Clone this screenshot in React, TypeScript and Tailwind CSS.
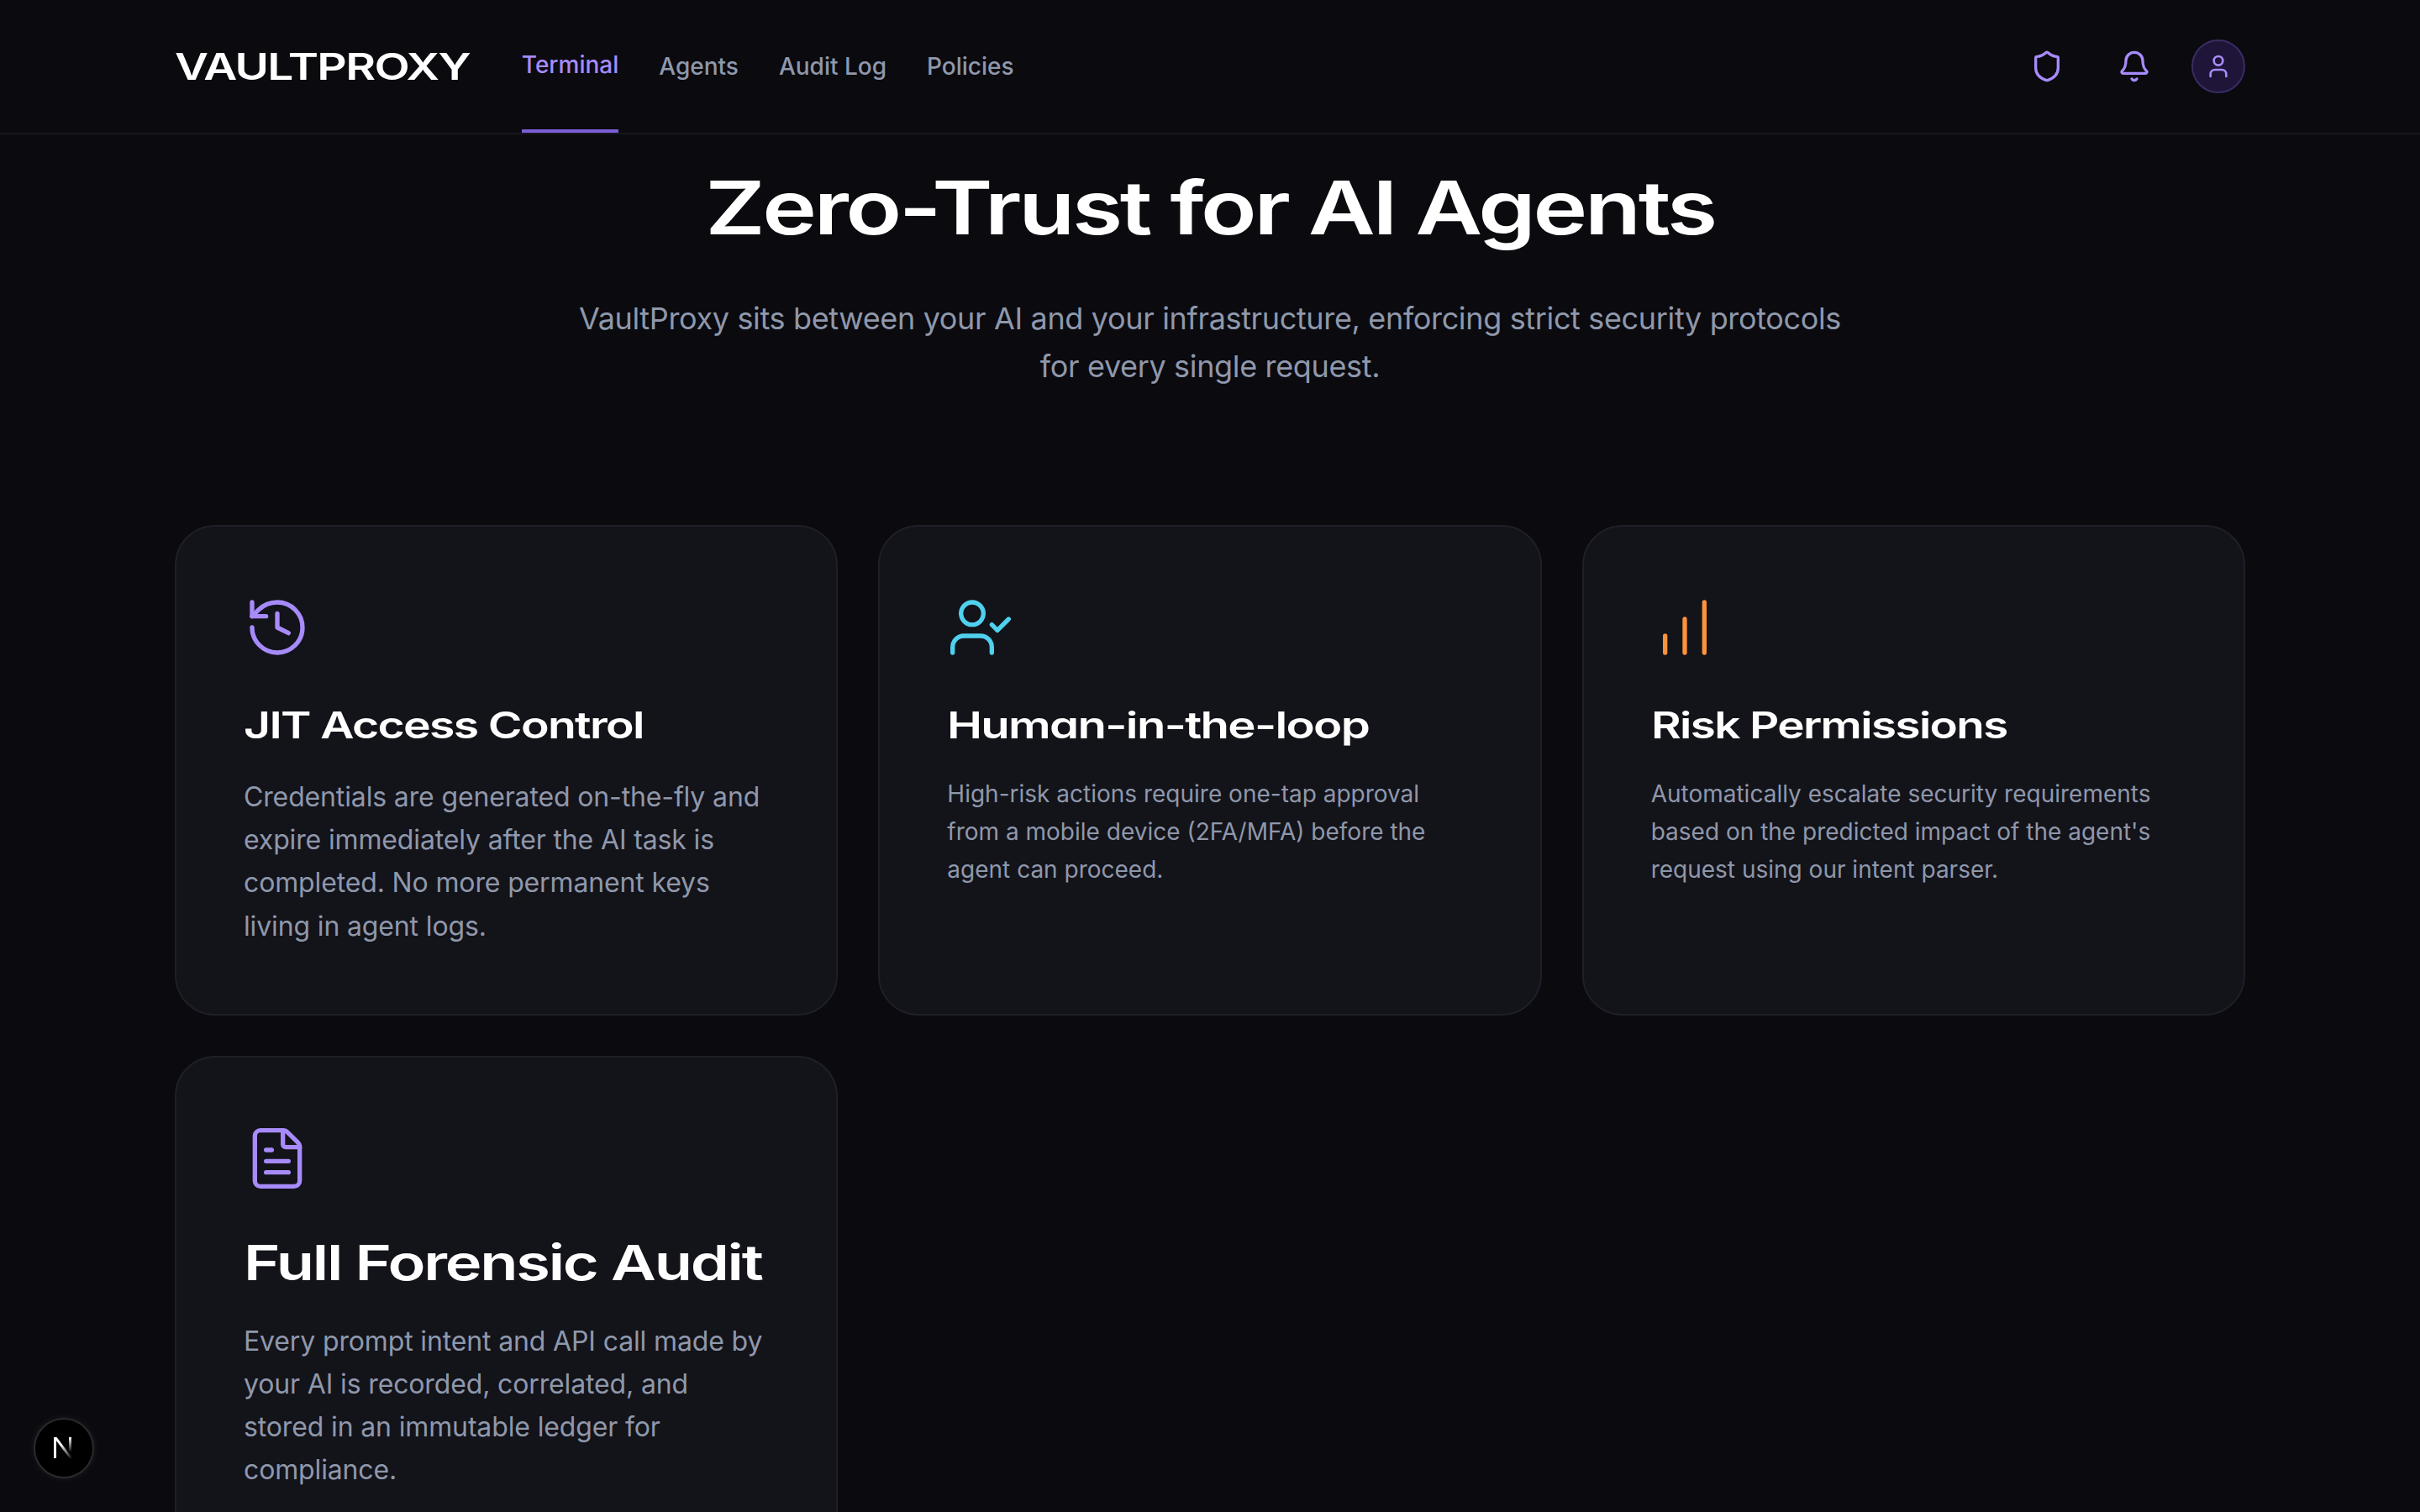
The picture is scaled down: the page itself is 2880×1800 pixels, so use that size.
import { Bell, ChartNoAxesColumnIncreasing, FileText, History, Shield, User, UserCheck } from "lucide-react"

const navLinks = ["Agents", "Audit Log", "Policies"]

const features = [
  {
    icon: <History strokeWidth={1.6} className="h-20 w-20 text-[#a78bfa]" />,
    title: "JIT Access Control",
    titleClass: "text-[44px] leading-[56px] scale-x-[1.257]",
    text: "Credentials are generated on-the-fly and expire immediately after the AI task is completed. No more permanent keys living in agent logs.",
    textClass: "text-[32px] leading-[51.2px] tracking-[-0.14px]",
  },
  {
    icon: <UserCheck strokeWidth={1.6} className="h-20 w-20 text-[#4fd1ee]" />,
    title: "Human-in-the-loop",
    titleClass: "text-[44px] leading-[56px] scale-x-[1.28]",
    text: "High-risk actions require one-tap approval from a mobile device (2FA/MFA) before the agent can proceed.",
    textClass: "text-[28px] leading-[45px]",
  },
  {
    icon: <ChartNoAxesColumnIncreasing strokeWidth={1.6} className="h-20 w-20 text-[#fb923c]" />,
    title: "Risk Permissions",
    titleClass: "text-[44px] leading-[56px] scale-x-[1.245]",
    text: "Automatically escalate security requirements based on the predicted impact of the agent's request using our intent parser.",
    textClass: "text-[28px] leading-[45px]",
  },
  {
    icon: <FileText strokeWidth={1.6} className="h-20 w-20 text-[#a78bfa]" />,
    title: "Full Forensic Audit",
    titleClass: "text-[58px] leading-[72px] scale-x-[1.275]",
    text: "Every prompt intent and API call made by your AI is recorded, correlated, and stored in an immutable ledger for compliance.",
    textClass: "text-[32px] leading-[51.2px] tracking-[-0.14px]",
  },
]

function NextBadge() {
  return (
    <div className="fixed bottom-[40px] left-[40px] flex h-[72px] w-[72px] items-center justify-center rounded-full border-2 border-[#2a2a2e] bg-black shadow-[0_0_8px_rgba(255,255,255,0.08)]">
      <svg width="30" height="30" viewBox="0 0 30 30" fill="none">
        <defs>
          <linearGradient id="n-diagonal" x1="12" y1="10" x2="24" y2="28" gradientUnits="userSpaceOnUse">
            <stop stopColor="#fff" />
            <stop offset="1" stopColor="#fff" stopOpacity="0" />
          </linearGradient>
          <linearGradient id="n-right" x1="22" y1="2" x2="22" y2="20" gradientUnits="userSpaceOnUse">
            <stop stopColor="#fff" />
            <stop offset="1" stopColor="#fff" stopOpacity="0" />
          </linearGradient>
        </defs>
        <path d="M3 2h3v25H3z" fill="#fff" />
        <path d="M3 2h3.6L26 28l-2.6 1.6z" fill="url(#n-diagonal)" />
        <path d="M21 2h3v19h-3z" fill="url(#n-right)" />
      </svg>
    </div>
  )
}

export default function App() {
  return (
    <div className="h-screen overflow-hidden bg-[#0a0a0f] font-['Inter',sans-serif]">
      <header className="h-[160px] border-b-2 border-[#17171f]">
        <div className="mx-auto flex h-full max-w-[2560px] items-center justify-between px-12">
          <div className="flex h-full items-center gap-[132px]">
            <span className="inline-block origin-left scale-x-[1.25] whitespace-nowrap text-[44px] font-semibold tracking-[-0.03em] text-white">
              VAULTPROXY
            </span>
            <nav className="flex h-full items-center gap-12 text-[28px] font-medium text-[#8f98ab]">
              <a className="flex h-full items-center border-b-4 border-[#7c5fd8] text-[#a78bfa]">Terminal</a>
              {navLinks.map((link) => (
                <a key={link} className="flex h-full items-center">{link}</a>
              ))}
            </nav>
          </div>
          <div className="flex items-center gap-8 text-[#a78bfa]">
            <button className="p-4"><Shield className="h-10 w-10" /></button>
            <button className="p-4"><Bell className="h-10 w-10" /></button>
            <div className="flex h-16 w-16 items-center justify-center rounded-full border-2 border-[#3a2c63] bg-[#1f1538]">
              <User className="h-8 w-8" />
            </div>
          </div>
        </div>
      </header>

      <main className="mx-auto max-w-[2560px] px-12 pt-[39px]">
        <div className="mb-[160px] text-center">
          <h1 className="mb-[56px] inline-block scale-x-[1.244] whitespace-nowrap text-[88px] font-semibold leading-[96px] tracking-[-0.03em] text-white [font-feature-settings:'cv11']">
            Zero-Trust for AI Agents
          </h1>
          <p className="mx-auto max-w-[1536px] text-[36px] leading-[57px] tracking-[-0.35px] text-[#8f98ab]">
            VaultProxy sits between your AI and your infrastructure, enforcing strict security protocols for every single request.
          </p>
        </div>

        <div className="grid grid-cols-3 gap-12">
          {features.map((feature) => (
            <div key={feature.title} className="rounded-[48px] border-2 border-[#1f1f28] bg-[#13131a] p-20 pb-[79px]">
              <div className="mb-12">{feature.icon}</div>
              <h3 className={`mb-[32px] inline-block origin-left whitespace-nowrap font-semibold tracking-[-0.03em] text-white [font-feature-settings:'cv11'] ${feature.titleClass}`}>
                {feature.title}
              </h3>
              <p className={`text-[#8f98ab] ${feature.textClass}`}>{feature.text}</p>
            </div>
          ))}
        </div>
      </main>

      <NextBadge />
    </div>
  )
}
